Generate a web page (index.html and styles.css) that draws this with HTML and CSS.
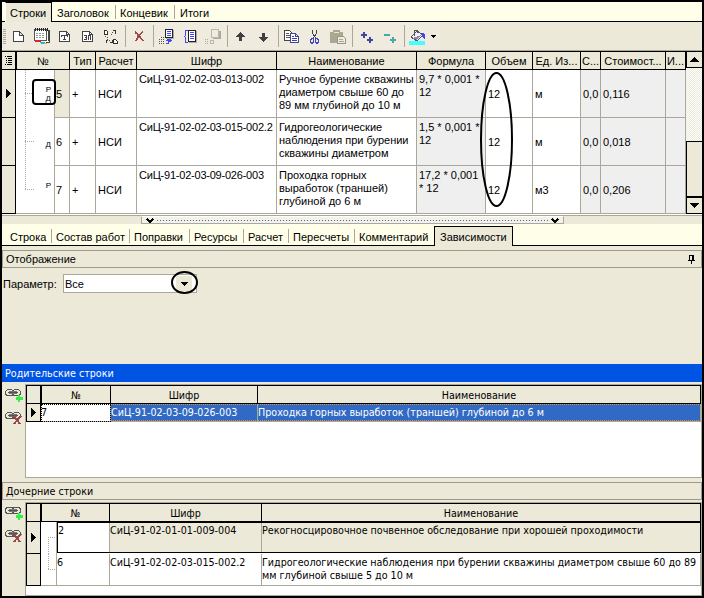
FILE: index.html
```html
<!DOCTYPE html>
<html lang="ru">
<head>
<meta charset="utf-8">
<title>Смета</title>
<link rel="stylesheet" href="styles.css">
</head>
<body>
<div class="window">
  <nav class="tabs tabs-top">
    <span class="tab active t-rows">Строки</span><span class="tab t-head">Заголовок</span><span class="tab t-end">Концевик</span><span class="tab last">Итоги</span>
  </nav>

  <div class="toolbar">
    <i class="grip"></i>
    <svg class="ic" viewBox="7 22 23 28"><path d="M13.5 31.5h6l4 4v6h-10zM19.5 31.5v4h4" fill="#fff" stroke="#444"/></svg>
    <svg class="ic" viewBox="30 22 23 28"><path d="M37.500 30.500h12v12h-4M36 30.500h12v10" fill="#fff" stroke="#444"/><path d="M34.500 29.500h12v11h-12z" fill="#fff" stroke="#555"/><path d="M35 29.500h14" stroke="#222" stroke-width="3" stroke-dasharray="1 1"/><path d="M36 33.500h9M36 35.500h9M36 37.500h9" stroke="#999" stroke-dasharray="2 1"/><path d="M35 40h4l2 2h-6z" fill="#e8202a"/><path d="M39 42h6v2h-4z" fill="#20b8d8"/><path d="M44 43h3v1h-3z" fill="#e0b820"/></svg>
    <svg class="ic" viewBox="53 22 23 28"><path d="M59.500 31.500h7l3 3v7h-10z" fill="#fff" stroke="#444"/><path d="M66.500 31.500v3h3M62 35.500h5M64.500 35v5M63 39.500h3M61.500 35v2M67.500 35v2" fill="none" stroke="#444"/></svg>
    <svg class="ic" viewBox="76 22 23 28"><path d="M82.500 31.500h7l3 3v7h-10z" fill="#fff" stroke="#444"/><path d="M89.500 31.500v3h3M84 35.500h2.500v4h-2.500M84.500 37.500h2M88.500 40v-4.500h2v4.500" fill="none" stroke="#444"/></svg>
    <svg class="ic" viewBox="99 22 23 28"><path d="M104.500 30.500h2l1 1v3h-3zM113.500 39.500h2l2 2v2h-4z" fill="#fff" stroke="#333"/><path d="M112.500 30.500h3v3M106.500 39.500v3M109.500 42.500h3v-3" fill="none" stroke="#333"/><path d="M111 34.500l3-3M105 36.500h2v4h3" fill="none" stroke="#555" stroke-dasharray="1 1"/></svg>
    <i class="sep"></i>
    <svg class="ic" viewBox="128 22 23 28"><path d="M135 32c3 2 5 5 8 9M143 32c-3 1-5 5-7 9" fill="none" stroke="#a04848" stroke-width="1.800"/></svg>
    <i class="sep s4"></i>
    <svg class="ic" viewBox="155 22 23 28"><path d="M166 30h8v9h-8z" fill="#aaa"/><path d="M165.500 29.500h7v8h-7z" fill="#fff" stroke="#222"/><path d="M167 31.500h4M167 33.500h4M167 35.500h4" stroke="#44f"/><path d="M159.500 39v5M161.500 37v7M163.500 37v7" stroke="#555" stroke-dasharray="1 1"/><path d="M166 43.500h2l1.500-4M166.500 40.500l3-1 2 2" fill="none" stroke="#44f" stroke-width="1.500"/></svg>
    <svg class="ic" viewBox="178 22 23 28"><path d="M189 31h8v12h-8z" fill="#aaa"/><path d="M188.500 30.500h7v11h-7z" fill="#fff" stroke="#222"/><path d="M190 32.500h4M190 34.500h4M190 36.500h4M190 38.500h4" stroke="#44f"/><path d="M187.500 30.500h-2v5l-1 1 1 1v5h2" fill="none" stroke="#44f"/></svg>
    <svg class="ic" viewBox="201 22 23 28"><path d="M213 31h8v8h-8z" fill="#aaa99a"/><path d="M211.500 29.500h7v8h-7z" fill="#efecdf" stroke="#bbb9a6"/><path d="M205.500 39v5M207.500 39v5" stroke="#aaa99a" stroke-dasharray="1 1"/><path d="M210.500 43.500v-3h3v3z" fill="none" stroke="#bbb9a6"/></svg>
    <i class="sep"></i>
    <svg class="ic" viewBox="229 22 23 28"><path d="M240.500 32l4.500 5h-3v4h-3v-4h-3z" fill="#404040"/></svg>
    <svg class="ic" viewBox="252 22 23 28"><path d="M263.500 42l4.500-5h-3v-4h-3v4h-3z" fill="#404040"/></svg>
    <i class="sep"></i>
    <svg class="ic" viewBox="280 22 23 28"><path d="M284.500 30.500h5l3 3v7h-8z" fill="#fff" stroke="#444"/><path d="M286 33.500h3M286 35.500h5M286 37.500h5" stroke="#555"/><path d="M290.500 33.500h5l3 3v6h-8z" fill="#fff" stroke="#4444a0"/><path d="M295.500 33.500v3h3M292 36.500h2M292 38.500h5M292 40.500h5" fill="none" stroke="#4444a0"/></svg>
    <svg class="ic" viewBox="303 22 23 28"><path d="M312.500 30v3l3 5M316.500 30v3l-3 5" fill="none" stroke="#444"/><path d="M313.500 38.500h-1.500l-1.500 1.500v2l1 1h1l1-1zM315.500 38.500h1.500l1.500 1.500v2l-1 1h-1l-1-1z" fill="none" stroke="#4444c0"/></svg>
    <svg class="ic" viewBox="326 22 23 28"><path d="M330 32h13v11h-13zM333 30h7v3h-7z" fill="#aaa891"/><path d="M334 32.500h5" stroke="#e9e6d5"/><path d="M337.500 36.500h6l2 2v5h-8z" fill="#efecdf" stroke="#99977f"/><path d="M339 39.500h4M339 41.500h5" stroke="#aaa891"/></svg>
    <i class="sep"></i>
    <svg class="ic i24" viewBox="354 22 24 28"><path d="M361 35h6M364 32v6M367 40h6M370 37v6" stroke="#4444a0" stroke-width="2"/></svg>
    <svg class="ic" viewBox="378 22 23 28"><path d="M384 35h6" stroke="#48a8a4" stroke-width="2"/><path d="M390 40h6M393 37v6" stroke="#48a8a4" stroke-width="2"/></svg>
    <i class="sep"></i>
    <svg class="ic" viewBox="406 22 23 28"><path d="M411 37l6-6 6 4-6 6z" fill="#eef" stroke="#555"/><path d="M412 38l9-3-4 5z" fill="#8888b0"/><path d="M414.500 36v-6h3v3" fill="none" stroke="#555"/><path d="M421 33c4-1 5 2 4 7l-3-3z" fill="#4444f0"/><path d="M409 41h16v4h-16z" fill="#4ff"/></svg>
    <svg class="ic i12" viewBox="429 22 12 28"><path d="M430 35h6l-3 3z" fill="#000"/></svg>
  </div>

  <section class="main-grid">
    <div class="g hrow">
      <div class="c ind"><svg width="9" height="12"><path d="M1 1.500h1M3 1.500h5M2 3.500h1M4 3.500h4M2 5.500h1M4 5.500h4M2 7.500h1M4 7.500h4M1 9.500h1M3 9.500h5" stroke="#000"/></svg></div>
      <div class="c no">№</div><div class="c">Тип</div><div class="c">Расчет</div><div class="c">Шифр</div><div class="c">Наименование</div><div class="c">Формула</div><div class="c">Объем</div><div class="c">Ед. Из...</div><div class="c">С...</div><div class="c">Стоимост...</div><div class="c">И...</div>
    </div>
    <div class="g row">
      <div class="c ind"><svg width="6" height="10"><path d="M0 0l5 4.500L0 9z"/></svg></div>
      <div class="c tree"><span class="mark">Р<br>Д</span><span class="num cur">5</span></div>
      <div class="c">+</div><div class="c">НСИ</div><div class="c top code">СиЦ-91-02-02-03-013-002</div><div class="c top">Ручное бурение скважины<br>диаметром свыше 60 до<br>89 мм глубиной до 10 м</div><div class="c top ro">9,7 * 0,001 *<br>12</div><div class="c">12</div><div class="c">м</div><div class="c ro">0,0</div><div class="c ro">0,116</div><div class="c ro"></div>
    </div>
    <div class="g row">
      <div class="c ind"></div>
      <div class="c tree"><span class="mark low">Д</span><span class="num">6</span></div>
      <div class="c">+</div><div class="c">НСИ</div><div class="c top code">СиЦ-91-02-02-03-015-002.2</div><div class="c top">Гидрогеологические<br>наблюдения при бурении<br>скважины диаметром</div><div class="c top ro">1,5 * 0,001 *<br>12</div><div class="c">12</div><div class="c">м</div><div class="c ro">0,0</div><div class="c ro">0,018</div><div class="c ro"></div>
    </div>
    <div class="g row">
      <div class="c ind"></div>
      <div class="c tree end"><span class="mark high">Р</span><span class="num">7</span></div>
      <div class="c">+</div><div class="c">НСИ</div><div class="c top code">СиЦ-91-02-03-09-026-003</div><div class="c top">Проходка горных<br>выработок (траншей)<br>глубиной до 6 м</div><div class="c top ro">17,2 * 0,001<br>* 12</div><div class="c">12</div><div class="c">м3</div><div class="c ro">0,0</div><div class="c ro">0,206</div><div class="c ro"></div>
    </div>
    <div class="scroll">
      <div class="sbtn"><svg width="9" height="5"><path d="M0 5l4.500-5L9 5z"/></svg></div>
      <div class="track"></div>
      <div class="thumb"></div>
      <div class="sbtn dn"><svg width="9" height="5"><path d="M0 0l4.500 5L9 0z"/></svg></div>
    </div>
  </section>

  <div class="splitter"><div class="handle"><svg width="8" height="5"><path d="M1 1l3 3 3-3" fill="none" stroke="#000" stroke-width="1.700"/></svg><i></i><svg width="8" height="5"><path d="M1 1l3 3 3-3" fill="none" stroke="#000" stroke-width="1.700"/></svg></div></div>

  <nav class="tabs tabs-low">
    <span class="tab l1">Строка</span><span class="tab l2">Состав работ</span><span class="tab l3">Поправки</span><span class="tab l4">Ресурсы</span><span class="tab l5">Расчет</span><span class="tab l6">Пересчеты</span><span class="tab l7">Комментарий</span><span class="tab active l8">Зависимости</span>
  </nav>

  <div class="bar display"><span>Отображение</span><svg width="8" height="10"><path d="M1.500 1v6M1 1.500h5M0 6.500h7M3.500 7v3" stroke="#000"/><path d="M4 1h2v6h-2z"/></svg></div>
  <div class="filter"><label>Параметр:</label><div class="combo"><span>Все</span><b><svg width="7" height="4"><path d="M0 0h7l-3.500 4z"/></svg></b></div></div>

  <div class="bar blue">Родительские строки</div>
  <div class="pane parents">
    <div class="links">
      <svg viewBox="0 0 18 14"><g fill="none" stroke="#555"><rect x=".5" y="1.500" width="8" height="6" rx="3"/><rect x="7.500" y="1.500" width="8" height="6" rx="3"/><path d="M4.500 3.500h7v2h-7z" stroke="#777"/><path d="M3 4.500h10"/></g><path d="M14 7v7M11 10.500h7" stroke="#3e4" stroke-width="2.200"/></svg>
      <svg viewBox="0 0 18 14"><g fill="none" stroke="#555"><rect x=".5" y="1.500" width="8" height="6" rx="3"/><rect x="7.500" y="1.500" width="8" height="6" rx="3"/><path d="M4.500 3.500h7v2h-7z" stroke="#777"/><path d="M3 4.500h10"/></g><path d="M9 5l6 8M16 5l-7 8" stroke="#a04848" stroke-width="1.800"/></svg>
    </div>
    <div class="table">
      <div class="r head"><div class="c ind"></div><div class="c">№</div><div class="c">Шифр</div><div class="c">Наименование</div></div>
      <div class="r sel"><div class="c ind"><svg width="6" height="10"><path d="M0 0l5 4.500L0 9z"/></svg></div><div class="c focus">7</div><div class="c">СиЦ-91-02-03-09-026-003</div><div class="c">Проходка горных выработок (траншей) глубиной до 6 м</div></div>
    </div>
  </div>

  <div class="bar children-title">Дочерние строки</div>
  <div class="pane children">
    <div class="links">
      <svg viewBox="0 0 18 14"><g fill="none" stroke="#555"><rect x=".5" y="1.500" width="8" height="6" rx="3"/><rect x="7.500" y="1.500" width="8" height="6" rx="3"/><path d="M4.500 3.500h7v2h-7z" stroke="#777"/><path d="M3 4.500h10"/></g><path d="M14 7v7M11 10.500h7" stroke="#3e4" stroke-width="2.200"/></svg>
      <svg viewBox="0 0 18 14"><g fill="none" stroke="#555"><rect x=".5" y="1.500" width="8" height="6" rx="3"/><rect x="7.500" y="1.500" width="8" height="6" rx="3"/><path d="M4.500 3.500h7v2h-7z" stroke="#777"/><path d="M3 4.500h10"/></g><path d="M9 5l6 8M16 5l-7 8" stroke="#a04848" stroke-width="1.800"/></svg>
    </div>
    <div class="table">
      <div class="r head"><div class="c ind"></div><div class="c">№</div><div class="c">Шифр</div><div class="c">Наименование</div></div>
      <div class="r child"><div class="c ind"><svg width="6" height="10"><path d="M0 0l5 4.500L0 9z"/></svg></div><div class="branch first"></div><div class="record current"><div class="c">2</div><div class="c">СиЦ-91-02-01-01-009-004</div><div class="c">Рекогносцировочное почвенное обследование при хорошей проходимости</div></div></div>
      <div class="r child"><div class="c ind"></div><div class="branch second"></div><div class="record"><div class="c">6</div><div class="c">СиЦ-91-02-02-03-015-002.2</div><div class="c">Гидрогеологические наблюдения при бурении скважины диаметром свыше 60 до 89<br>мм глубиной свыше 5 до 10 м</div></div></div>
    </div>
  </div>

  <svg class="callouts" width="704" height="598" fill="none" stroke="#000" stroke-width="2"><rect x="33" y="80" width="22" height="24" rx="3"/><ellipse cx="496.500" cy="139.500" rx="15.500" ry="66.500"/><ellipse cx="184.500" cy="282.500" rx="12.500" ry="10.500"/></svg>
</div>
</body>
</html>
```
FILE: styles.css
```css
* { box-sizing: border-box; }

body {
  margin: 0;
  font: 11px/13px "Liberation Sans", Arial, sans-serif;
  color: #000;
}

svg { display: block; flex: none; shape-rendering: crispEdges; }

.window {
  position: relative;
  width: 704px;
  height: 598px;
  border: 2px solid #000;
  background: #ece9d8;
  overflow: hidden;
  display: flex;
  flex-direction: column;
}

.window > * { flex: none; }

/* Tabs */
.tabs { display: flex; background: #ffffe9; border-bottom: 1px solid #000; white-space: nowrap; }
.tabs-top { height: 20px; padding-left: 3px; }
.tabs-low { height: 22px; padding: 2px 0 0 0; }
.tab { position: relative; display: block; height: 18px; line-height: 22px; }
.tab::after { content: ""; position: absolute; right: 0; top: 3px; width: 1px; height: 14px; background: #aca899; }
.tab.last::after, .tab.active::after, .l7::after { display: none; }
.tab.active { height: 20px; background: #ece9d8; border: 1px solid #000; border-bottom: 0; line-height: 20px; }
.tabs-top .active { border-left-color: #fff; }
.t-rows { width: 47px; padding-left: 4px; }
.t-head { width: 64px; padding-left: 5px; }
.t-end { width: 59px; padding-left: 4px; }
.last { padding-left: 5px; }
.l1 { width: 50px; padding-left: 8px; }
.l2 { width: 78px; padding-left: 4px; }
.l3 { width: 60px; padding-left: 4px; }
.l4 { width: 54px; padding-left: 4px; }
.l5 { width: 45px; padding-left: 4px; }
.l6 { width: 66px; padding-left: 4px; }
.l7 { width: 79px; padding-left: 4px; }
.l8 { width: 79px; padding-left: 5px; }

/* Toolbar */
.toolbar { display: flex; height: 29px; border-bottom: 1px solid #aca899; background: linear-gradient(90deg, #efebde 438px, #ece9d8 438px); }
.grip { width: 3px; margin: 7px 1px 6px; background: repeating-linear-gradient(#aca899 0 1px, #efebde 1px 2px); }
.ic { width: 23px; height: 28px; }
.i24 { width: 24px; }
.i12 { width: 12px; }
.sep { width: 5px; margin: 3px 0 3px; background: linear-gradient(90deg, transparent 3px, #aca899 3px 4px, transparent 4px); }
.sep.s4 { width: 4px; background: linear-gradient(90deg, transparent 2px, #aca899 2px 3px, transparent 3px); }
.ic + .sep:nth-of-type(2) { width: 6px; }

/* Main grid */
.main-grid {
  display: grid;
  grid-template-columns: 684px 16px;
  grid-template-rows: 19px 48px 48px 48px;
  height: 163px;
}
.main-grid .g {
  grid-column: 1;
  display: grid;
  grid-template-columns: 14px 54px 26px 41px 140px 140px 69px 47px 48px 20px 65px 20px;
}
.main-grid .c {
  display: flex;
  align-items: center;
  border-right: 1px solid #aca899;
  border-bottom: 1px solid #aca899;
  padding: 2px 0 0 2px;
  background: #fff;
  white-space: nowrap;
  overflow: hidden;
}
.main-grid .hrow .c {
  justify-content: center;
  padding: 1px 0 0;
  background: #ece9d8;
  border: 1px solid #000;
  border-left: 0;
}
.main-grid .hrow .no { border-left: 1px solid #000; }
.main-grid .c.ind { background: #ece9d8; border-right-color: #000; border-bottom-color: #000; justify-content: center; padding: 0; }
.main-grid .c.top { align-items: flex-start; padding-top: 3px; }
.main-grid .c.code { letter-spacing: -0.22px; }
.main-grid .c.ro { background: #efefef; }
.main-grid .c.tree { padding: 0; border-bottom: 0; align-items: stretch; background:
  repeating-linear-gradient(#aca899 0 1px, transparent 1px 2px) 9px 0 / 1px 100% no-repeat,
  repeating-linear-gradient(90deg, #aca899 0 1px, transparent 1px 2px) 9px 23px / 10px 1px no-repeat, #fff; }
.main-grid .c.tree.end { border-bottom: 1px solid #aca899; background:
  repeating-linear-gradient(#aca899 0 1px, transparent 1px 2px) 9px 0 / 1px 24px no-repeat,
  repeating-linear-gradient(90deg, #aca899 0 1px, transparent 1px 2px) 9px 23px / 10px 1px no-repeat, #fff; }
.mark { width: 38px; padding: 15px 3px 0 0; text-align: right; font-size: 8px; line-height: 9px; }
.mark.low { padding-top: 22px; }
.mark.high { padding-top: 15px; }
.num { width: 15px; border-left: 1px solid #aca899; border-bottom: 1px solid #aca899; display: flex; align-items: center; padding: 2px 0 0 1px; }
.num.cur { background: #ece9d8; }
.end .num { border-bottom: 0; }
.scroll { grid-column: 2; grid-row: 1 / 5; display: flex; flex-direction: column; }
.sbtn { height: 17px; border: 1px solid #000; border-right: 0; display: flex; align-items: center; justify-content: center; }
.track { flex: 1; background: repeating-conic-gradient(#ece9d8 0 25%, #fff 0 50%) 0 0 / 2px 2px; }
.thumb { height: 56px; border: 1px solid #000; border-right: 0; }

.splitter { height: 10px; border-top: 1px solid #fff; padding: 0 0 0 139px; background: linear-gradient(#aca899 1px, #ece9d8 1px); }
.handle { margin-top: 1px; width: 423px; height: 8px; border: 1px solid #aca899; border-top-color: #fff; display: flex; align-items: center; justify-content: space-between; padding: 0 4px; background: #f3f1e8; }
.handle i { flex: 1; height: 1px; margin: 0 3px; background: repeating-linear-gradient(90deg, #316ac5 0 1px, transparent 1px 3px); }

/* Section bars */
.bar { display: flex; align-items: center; height: 18px; border: 1px solid #9d9a8c; padding: 0 3px; }
.display { margin-top: 4px; justify-content: space-between; padding-right: 5px; }
.filter { display: flex; align-items: flex-start; height: 96px; padding: 6px 0 0 1px; }
.filter label { width: 60px; line-height: 20px; }
.combo { width: 134px; height: 19px; border: 1px solid #aca899; background: #fff; display: flex; justify-content: space-between; align-items: center; padding-left: 1px; }
.combo span { padding-top: 1px; }
.combo b { width: 16px; height: 15px; margin-right: 4px; background: #ece9d8; display: flex; align-items: center; justify-content: center; }
.blue, .children-title, .table { font-family: "DejaVu Sans Condensed", "DejaVu Sans", sans-serif; font-stretch: condensed; font-size: 10.65px; }
.blue { background: #0054e3; border-color: #0054e3; color: #fff; padding-left: 2px; }
.children-title { margin-top: 4px; }

/* Linked records */
.pane { display: flex; padding-top: 2px; }
.links { width: 23px; padding: 4px 0 0 3px; }
.links svg { width: 18px; height: 14px; margin-bottom: 9px; }
.table { width: 677px; border: 1px solid #aca899; background: #fff; }
.parents .table { height: 94px; }
.children .table { height: 94px; }
.table .r { display: grid; grid-template-columns: 15px 70px 147px 443px; white-space: nowrap; }
.table .c { border-right: 1px solid #aca899; padding-left: 0; line-height: 13px; }
.table .head .c { height: 19px; background: #ece9d8; border: 1px solid #000; border-left: 0; text-align: center; line-height: 19px; padding: 0; }
.table .r .c.ind { background: #ece9d8; border-left: 1px solid #000; border-right: 1px solid #000; display: flex; align-items: center; justify-content: center; }
.table .head .c:nth-child(2) { border-left: 1px solid #000; }
.sel .c { height: 18px; border-bottom: 1px solid #aca899; background: #316ac5; color: #fff; padding-top: 2px; }
.sel .c:nth-child(n+3) { background:
  repeating-linear-gradient(90deg, #e09030 0 1px, transparent 1px 2px) 0 0 / 100% 1px no-repeat,
  repeating-linear-gradient(90deg, #e09030 0 1px, transparent 1px 2px) 0 100% / 100% 1px no-repeat, #316ac5; }
.sel .c.ind { border-bottom-color: #000; padding: 0; }
.sel .c.focus { background: #fff; color: #000; outline: 1px dotted #000; outline-offset: -1px; }
.children .head { grid-template-columns: 15px 69px 152px 439px; }
.table .child { grid-template-columns: 15px 16px 644px; height: 32px; }
.child .c.ind { border-bottom: 1px solid #000; }
.record { display: grid; grid-template-columns: 53px 152px 439px; border-bottom: 1px solid #aca899; }
.record .c { padding-top: 2px; }
.record.current { border: 1px solid #000; margin-bottom: 1px; grid-template-columns: 52px 152px 438px; }
.record.current .c { background: #ece9d8; padding-top: 1px; }
.record.current .c:first-child { background: #fff; }
.record.current .c:last-child { border-right: 0; }
.branch { border-right: 1px solid #aca899; }
.branch.first { background:
  repeating-linear-gradient(#aca899 0 1px, transparent 1px 2px) 7px 15px / 1px 17px no-repeat,
  repeating-linear-gradient(90deg, #aca899 0 1px, transparent 1px 2px) 7px 15px / 8px 1px no-repeat; }
.branch.second { border-bottom: 1px solid #aca899; background:
  repeating-linear-gradient(#aca899 0 1px, transparent 1px 2px) 7px 0 / 1px 16px no-repeat,
  repeating-linear-gradient(90deg, #aca899 0 1px, transparent 1px 2px) 7px 15px / 8px 1px no-repeat; }

.callouts { position: absolute; left: -2px; top: -2px; pointer-events: none; shape-rendering: auto; }
```
